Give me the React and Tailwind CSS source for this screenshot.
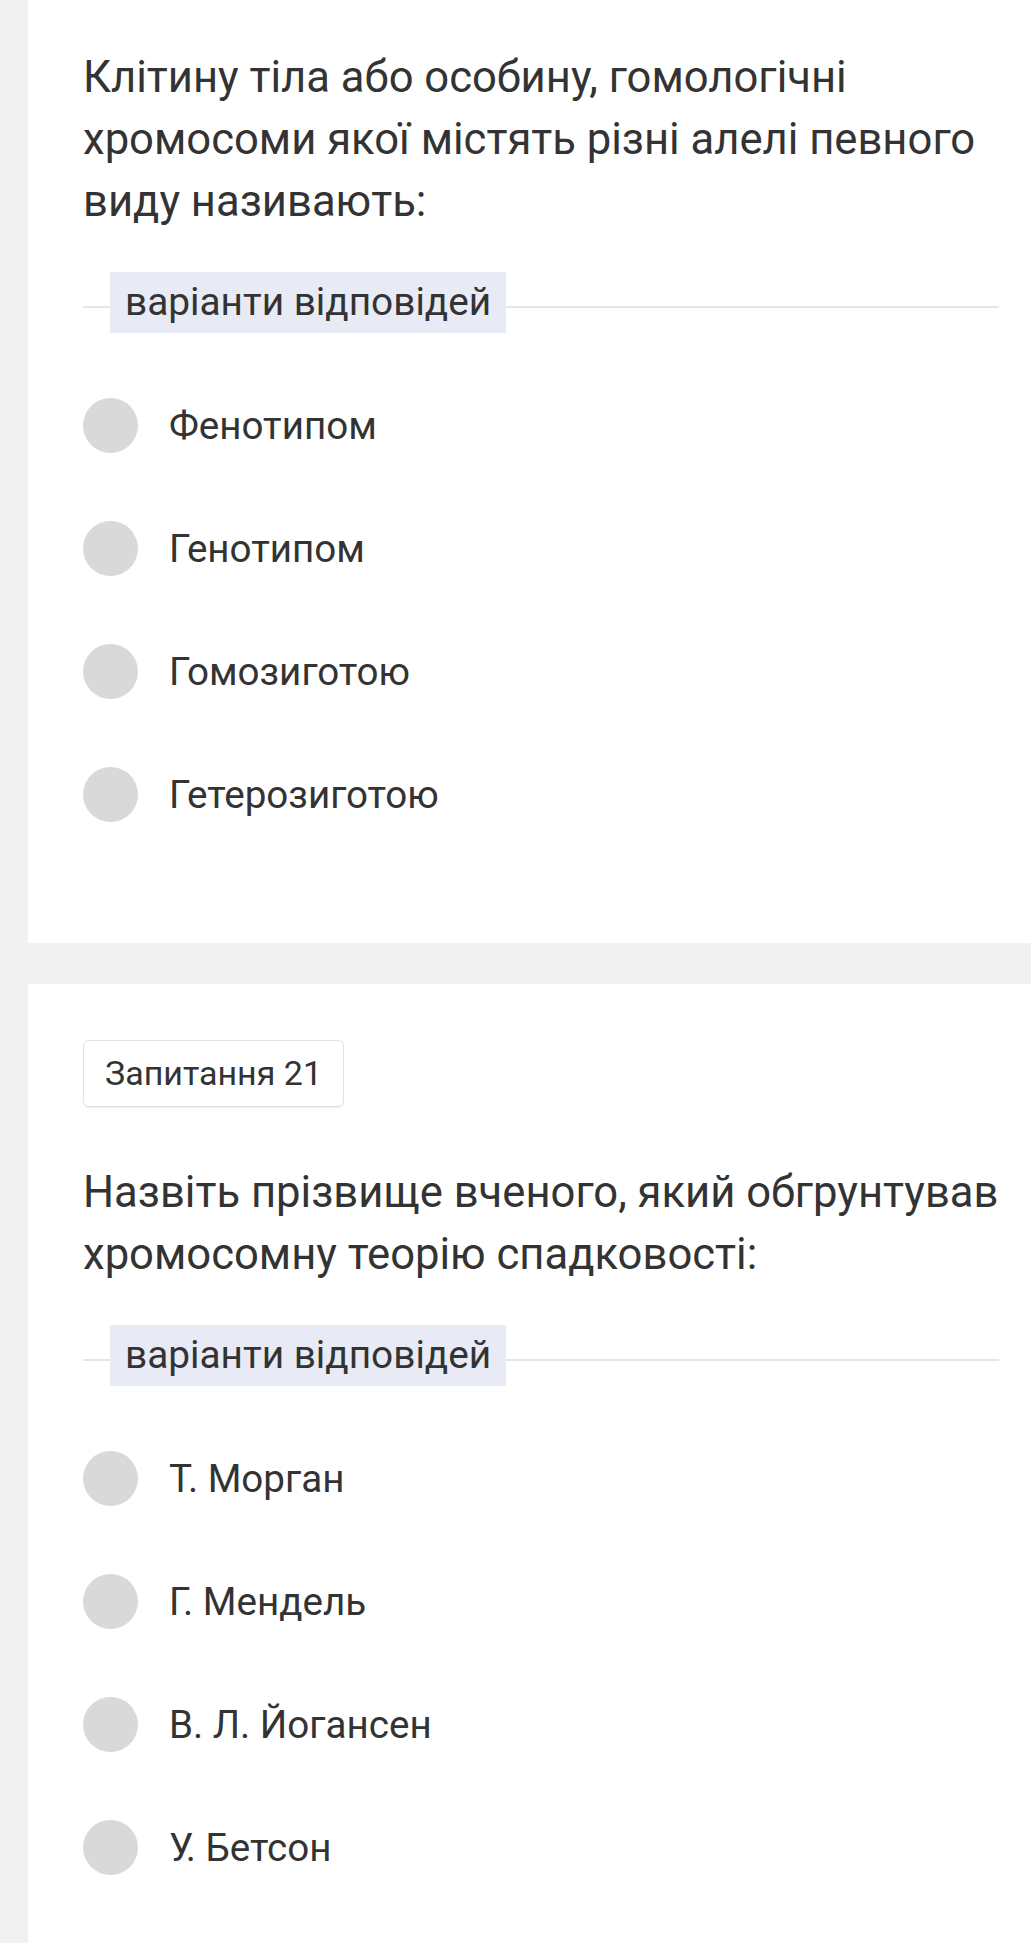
const questions = [
  {
    badge: null,
    text: 'Клітину тіла або особину, гомологічні хромосоми якої містять різні алелі певного виду називають:',
    options: ['Фенотипом', 'Генотипом', 'Гомозиготою', 'Гетерозиготою'],
  },
  {
    badge: 'Запитання 21',
    text: 'Назвіть прізвище вченого, який обгрунтував хромосомну теорію спадковості:',
    options: ['Т. Морган', 'Г. Мендель', 'В. Л. Йогансен', 'У. Бетсон'],
  },
];

const QuestionCard = ({ q, first }) => (
  <div className={`bg-white pl-[55px] pr-[30px] ${first ? 'pt-[47px] pb-[87px]' : 'pt-[56px] pb-[34px]'}`}>
    {q.badge && (
      <div className="mb-[55px]">
        <span className="inline-flex items-center h-[67px] px-[21px] border border-[#e2e2e2] rounded-[6px] shadow-[0_1px_1px_rgba(0,0,0,0.08)] text-[34px] text-[#333]">
          {q.badge}
        </span>
      </div>
    )}
    <p className="text-[43.6px] leading-[62px] text-[#333]">{q.text}</p>

    {/* divider with label */}
    <div className="mt-[39px] flex items-center">
      <div className="w-[27px] h-[2px] mt-[9px] bg-[#e6e6e6]"></div>
      <div className="h-[61px] px-[15px] flex items-center bg-[#e8ebf5] text-[38.8px] text-[#333]">
        варіанти відповідей
      </div>
      <div className="flex-1 h-[2px] mt-[9px] mr-[2px] bg-[#e6e6e6]"></div>
    </div>

    <div className="mt-[31px]">
      {q.options.map((opt) => (
        <div key={opt} className="h-[123px] flex items-center">
          <div className="w-[55px] h-[55px] rounded-full bg-[#d9d9d9] shrink-0"></div>
          <span className="ml-[31px] text-[38.6px] text-[#333]">{opt}</span>
        </div>
      ))}
    </div>
  </div>
);

export default function App() {
  return (
    <div className="min-h-screen bg-[#f1f1f1] pl-[28px]" style={{ fontFamily: 'Roboto, "Noto Sans", sans-serif' }}>
      <div className="flex flex-col gap-[41px]">
        {questions.map((q, i) => (
          <QuestionCard key={i} q={q} first={i === 0} />
        ))}
      </div>
    </div>
  );
}
